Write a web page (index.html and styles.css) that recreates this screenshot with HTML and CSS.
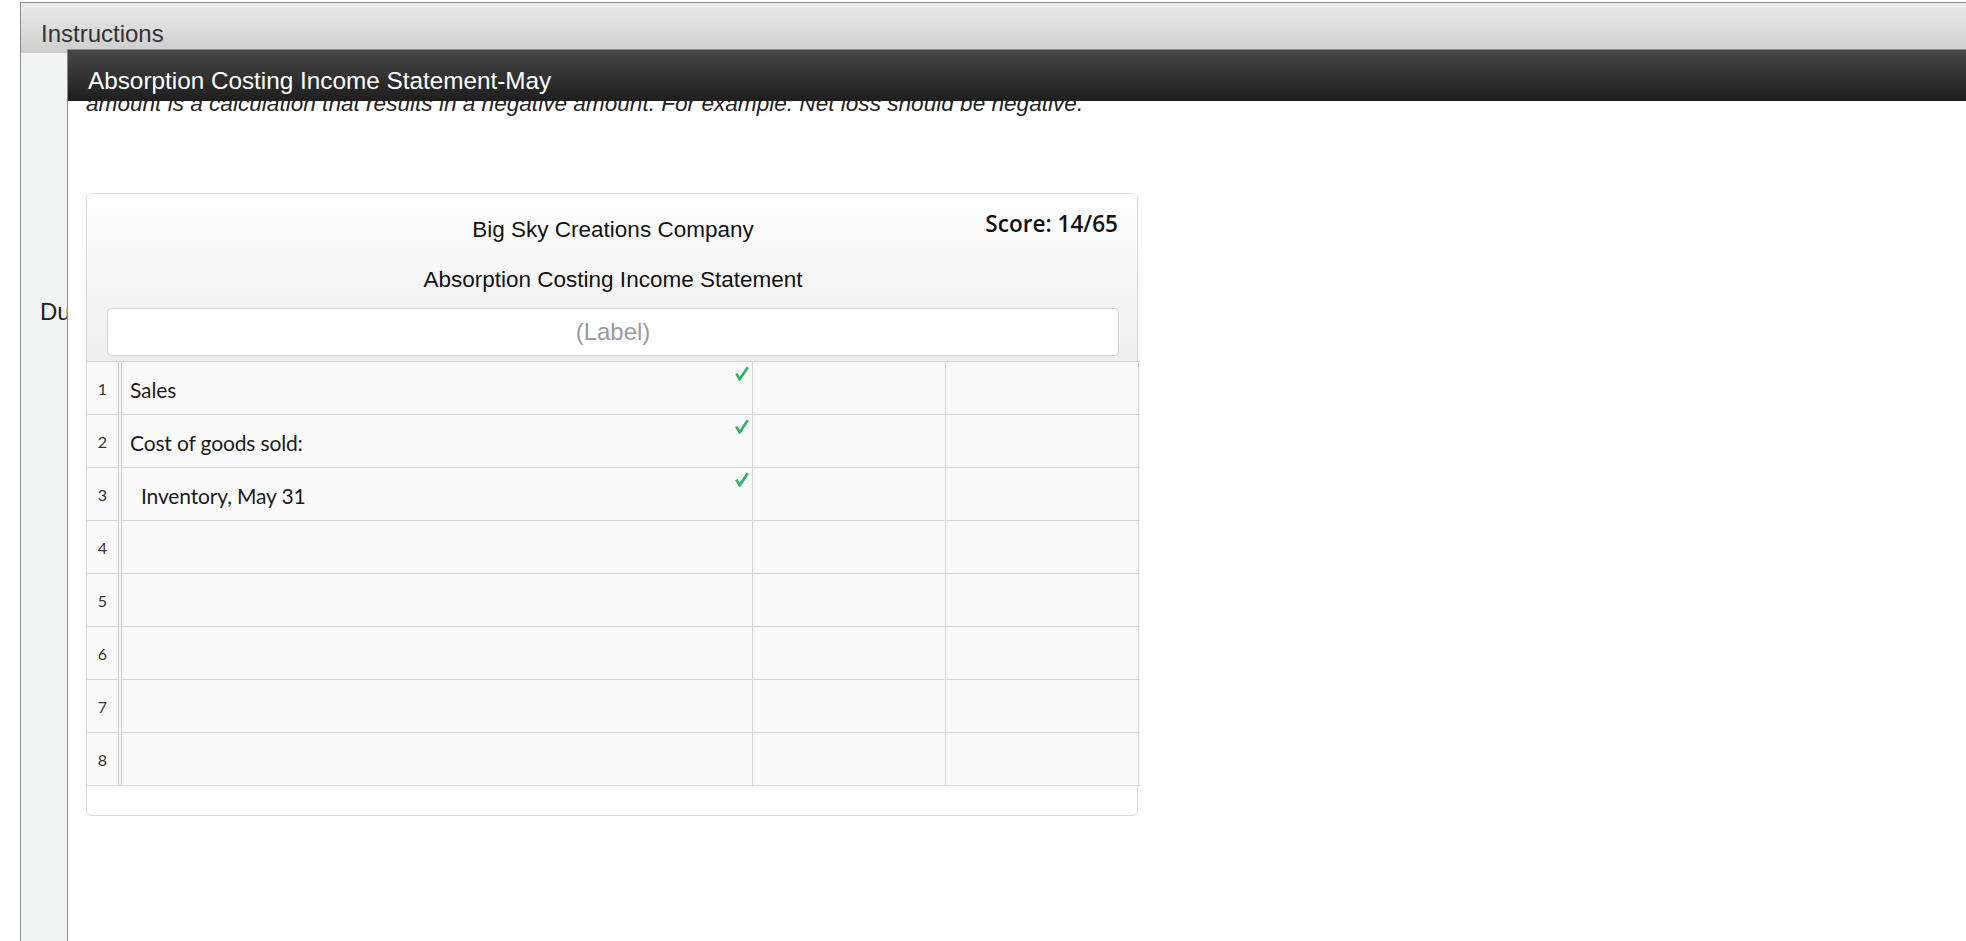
FILE: index.html
```html
<!DOCTYPE html>
<html lang="en">
<head>
<meta charset="utf-8">
<title>Absorption Costing Income Statement-May</title>
<link rel="stylesheet" href="styles.css">
</head>
<body>
<div class="frame">
  <div class="topbar">Instructions</div>
  <div class="main">
    <div class="gutter"><span class="gutter-text">Du</span></div>
    <div class="content">
      <div class="sheet-header">Absorption Costing Income Statement-May</div>
      <p class="note">amount is a calculation that results in a negative amount. For example: Net loss should be negative.</p>
      <div class="panel">
        <div class="panel-head">
          <div class="score">Score: 14/65</div>
          <div class="title">Big Sky Creations Company</div>
          <div class="title title-2">Absorption Costing Income Statement</div>
          <div class="label-box">(Label)</div>
        </div>
        <div class="grid">
          <div class="row">
            <div class="cell num">1</div>
            <div class="cell label">Sales<svg class="check" viewBox="0 0 14 15"><polyline points="1.3,7.6 4.7,13.3 12.8,1.2"/></svg></div>
            <div class="cell"></div>
            <div class="cell"></div>
          </div>
          <div class="row">
            <div class="cell num">2</div>
            <div class="cell label">Cost of goods sold:<svg class="check" viewBox="0 0 14 15"><polyline points="1.3,7.6 4.7,13.3 12.8,1.2"/></svg></div>
            <div class="cell"></div>
            <div class="cell"></div>
          </div>
          <div class="row">
            <div class="cell num">3</div>
            <div class="cell label indent">Inventory, May 31<svg class="check" viewBox="0 0 14 15"><polyline points="1.3,7.6 4.7,13.3 12.8,1.2"/></svg></div>
            <div class="cell"></div>
            <div class="cell"></div>
          </div>
          <div class="row">
            <div class="cell num">4</div>
            <div class="cell label"></div>
            <div class="cell"></div>
            <div class="cell"></div>
          </div>
          <div class="row">
            <div class="cell num">5</div>
            <div class="cell label"></div>
            <div class="cell"></div>
            <div class="cell"></div>
          </div>
          <div class="row">
            <div class="cell num">6</div>
            <div class="cell label"></div>
            <div class="cell"></div>
            <div class="cell"></div>
          </div>
          <div class="row">
            <div class="cell num">7</div>
            <div class="cell label"></div>
            <div class="cell"></div>
            <div class="cell"></div>
          </div>
          <div class="row">
            <div class="cell num">8</div>
            <div class="cell label"></div>
            <div class="cell"></div>
            <div class="cell"></div>
          </div>
        </div>
        <div class="panel-foot"></div>
      </div>
    </div>
  </div>
</div>
</body>
</html>
```
FILE: styles.css
```css
html, body {
  margin: 0;
  height: 100%;
  overflow: hidden;
  background: #fff;
  font-family: "Liberation Sans", Arial, sans-serif;
  color: #222;
}

.frame {
  margin: 2px 0 0 20px;
  height: calc(100% - 2px);
  box-sizing: border-box;
  border-top: 1px solid #8c8c8c;
  border-left: 1px solid #8c8c8c;
  display: flex;
  flex-direction: column;
}

.topbar {
  flex: none;
  height: 50px;
  box-sizing: border-box;
  padding: 12px 0 0 20px;
  line-height: 38px;
  font-size: 24px;
  color: #333;
  background: linear-gradient(#ebebeb, #cdcdcd);
}

.main {
  flex: 1;
  display: flex;
  min-height: 0;
}

.gutter {
  flex: none;
  width: 46px;
  box-sizing: border-box;
  padding-top: 244px;
  background: #f2f3f3;
  overflow: hidden;
}

.gutter-text {
  display: block;
  padding-left: 19px;
  font-size: 24px;
  line-height: 30px;
  white-space: nowrap;
  color: #222;
}

.content {
  flex: 1;
  position: relative;
  border-left: 1px solid #8c8c8c;
  background: #fff;
  padding: 35px 0 0 18px;
}

.sheet-header {
  position: absolute;
  z-index: 2;
  left: -1px;
  right: 0;
  top: -4px;
  height: 40px;
  padding: 11px 0 0 20px;
  border-top: 1px solid #8a8a8a;
  border-left: 1px solid #8a8a8a;
  background: linear-gradient(#474747, #1e1e1e);
  color: #fff;
  font-size: 24.3px;
  line-height: 40px;
  white-space: nowrap;
}

.note {
  margin: 0;
  font-style: italic;
  font-size: 22.6px;
  line-height: 31px;
  color: #222;
  white-space: nowrap;
}

.panel {
  margin-top: 74px;
  width: 1052px;
  box-sizing: border-box;
  border: 1px solid #d9d9d9;
  border-radius: 6px;
  background: #fff;
}

.panel-head {
  position: relative;
  padding: 21px 18px 5px 20px;
  border-radius: 5px 5px 0 0;
  background: linear-gradient(#ffffff, #eeeeee);
  text-align: center;
}

.title {
  font-size: 22.5px;
  line-height: 30px;
  color: #111;
}

.title-2 {
  margin-top: 20px;
}

.label-box {
  margin-top: 13px;
  height: 48px;
  box-sizing: border-box;
  border: 1px solid #d3d3d3;
  border-radius: 4px;
  background: #fff;
  font-size: 24px;
  line-height: 46px;
  color: #9a9a9a;
}

.score {
  position: absolute;
  top: 15px;
  right: 19px;
  font-family: "Open Sans", "DejaVu Sans", sans-serif;
  font-weight: 600;
  font-size: 22.6px;
  line-height: 30px;
  color: #111;
}

.grid {
  margin-left: -1px;
  width: 1053px;
  border-top: 1px solid #d6d6d6;
  border-left: 1px solid #d6d6d6;
}

.row {
  display: grid;
  grid-template-columns: 35px 631px 193px 193px;
  height: 53px;
  box-sizing: border-box;
  border-bottom: 1px solid #d6d6d6;
  background: #fafafa;
}

.cell {
  position: relative;
  display: flex;
  align-items: center;
  box-sizing: border-box;
  border-right: 1px solid #d6d6d6;
}

.num {
  justify-content: center;
  border-right: 4px double #c9c9c9;
  font-family: Lato, "Liberation Sans", sans-serif;
  font-size: 16px;
  color: #333;
}

.label {
  padding: 3px 0 0 8px;
  font-family: Lato, "Liberation Sans", sans-serif;
  font-size: 21px;
  letter-spacing: -0.15px;
  color: #1a1a1a;
  white-space: nowrap;
}

.label.indent {
  padding-left: 19px;
}

.check {
  position: absolute;
  top: 4px;
  right: 3px;
  width: 14px;
  height: 15px;
  fill: none;
  stroke: #33b26b;
  stroke-width: 2.7;
  stroke-linejoin: miter;
}

.panel-foot {
  height: 29px;
}
```
